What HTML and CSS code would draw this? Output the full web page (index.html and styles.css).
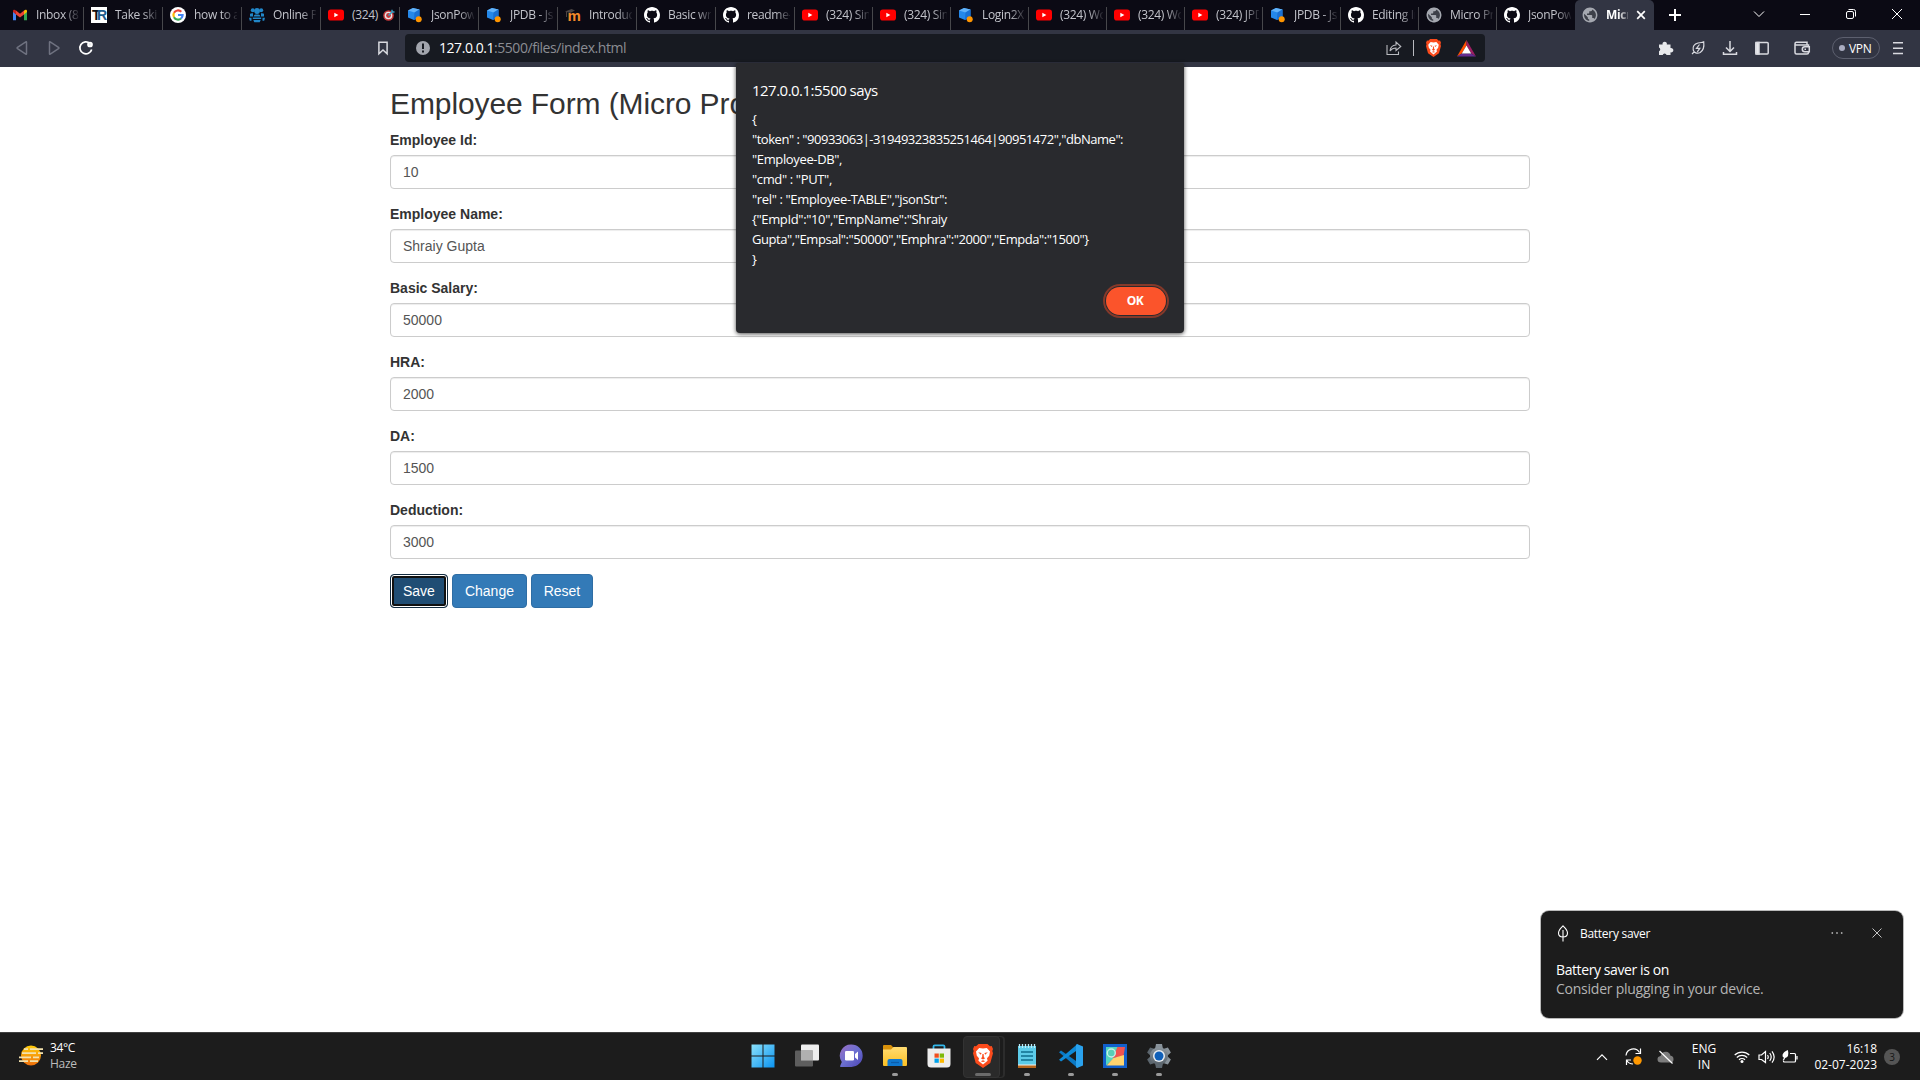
FILE: index.html
```html
<!DOCTYPE html>
<html lang="en">
<head>
<meta charset="utf-8">
<title>Micro Project</title>
<link rel="stylesheet" href="styles.css">
</head>
<body>
<svg class="defs" aria-hidden="true">
  <linearGradient id="g-win" x1="0" y1="0" x2="1" y2="1"><stop offset="0" stop-color="#8be1fb"/><stop offset="1" stop-color="#0a93f0"/></linearGradient>
  <linearGradient id="g-sun" x1="0" y1="0" x2="0" y2="1"><stop offset="0" stop-color="#ffcd0a"/><stop offset="1" stop-color="#f0700c"/></linearGradient>
  <linearGradient id="g-chat" x1="0" y1="0" x2="1" y2="1"><stop offset="0" stop-color="#9a6fc4"/><stop offset=".5" stop-color="#6b6fd0"/><stop offset="1" stop-color="#4c44b4"/></linearGradient>
  <linearGradient id="g-folder" x1="0" y1="0" x2="0" y2="1"><stop offset="0" stop-color="#ffdc72"/><stop offset="1" stop-color="#fbbf22"/></linearGradient>
  <linearGradient id="g-gear" x1="0" y1="0" x2="0" y2="1"><stop offset="0" stop-color="#8c969e"/><stop offset="1" stop-color="#59636b"/></linearGradient>
  <symbol id="gmail" viewBox="0 0 16 16"><path fill="#4285f4" d="M1 4v9.3h3V7z"/><path fill="#34a853" d="M15 4v9.3h-3V7z"/><path fill="#c5221f" d="M1 4.2V5l3 2.4V3.8C2.8 2.300 1 2.700 1 4.200z"/><path fill="#fbbc04" d="M15 4.200V5l-3 2.400V3.800c1.200-1.500 3-1.100 3 .4z"/><path fill="#ea4335" d="M4 3.600l4 3.100 4-3.100v3.900L8 10.600 4 7.500z"/></symbol>
  <symbol id="tr" viewBox="0 0 16 16"><rect width="16" height="16" fill="#fff"/><text x="1" y="13" class="tr-mark">T<tspan>R</tspan></text></symbol>
  <symbol id="google" viewBox="0 0 16 16"><circle cx="8" cy="8" r="8" fill="#fff"/><g fill="none" stroke-width="2.200"><path stroke="#ea4335" d="M4 5.800A4.600 4.600 0 0 1 11.300 4.800"/><path stroke="#fbbc05" d="M4 10.200a4.700 4.700 0 0 1 0-4.400"/><path stroke="#34a853" d="M4 10.200a4.600 4.600 0 0 0 7 1.300"/><path stroke="#4285f4" d="M8 8h4.600a4.600 4.600 0 0 1-1.600 3.500"/></g></symbol>
  <symbol id="people" viewBox="0 0 16 16"><g fill="#2186c8"><circle cx="3.800" cy="3.300" r="2"/><circle cx="12.200" cy="3.300" r="2"/><path d="M1 6.800q1.500-1 3-.5v3.200H1zM12 6.300q1.500-.5 3 .5v2.700h-3zM0 10.800h2.500v3H.800zM13.500 10.800H16l-.8 3h-1.700z"/><circle cx="8" cy="4" r="2.900"/><path d="M4.600 9.500Q5 7.500 6.500 7.500h3q1.500 0 1.900 2zM3.800 10.500h8.400v1.500H3.800zM4.300 13h7.400l-1 2.200H5.300z"/></g></symbol>
  <symbol id="yt" viewBox="0 0 16 16"><rect y="2.500" width="16" height="11" rx="2.800" fill="#f00"/><path fill="#fff" d="M6.300 5.700v4.600L10.400 8z"/></symbol>
  <symbol id="json" viewBox="0 0 16 16"><path fill="#2488ea" d="M1 3.500l5-2.500 6.500 1.500V10l-5.500 3-6-2.500z"/><path fill="#62b2f8" d="M1 3.500l5-2.500 6.500 1.500L7.500 5.500z"/><path fill="#1a70d2" d="M7.500 5.500l5-3V10L7 13z"/><circle cx="11.700" cy="12.300" r="3" fill="#ff9500"/></symbol>
  <symbol id="moodle" viewBox="0 0 16 16"><text x="2.500" y="13.500" class="moodle-mark">m</text><path d="M0 4.500L6.500 2 10 3.500 5 6z" fill="#4b4544"/><path d="M1.500 5v5" stroke="#6b5c53" stroke-width=".7"/></symbol>
  <symbol id="gh" viewBox="0 0 16 16"><path fill="#fff" d="M8 0C3.580 0 0 3.580 0 8c0 3.540 2.290 6.530 5.470 7.590.4.070.55-.17.55-.38 0-.19-.01-.82-.01-1.490-2.010.37-2.530-.49-2.690-.94-.09-.23-.48-.94-.82-1.130-.28-.15-.68-.52-.01-.53.63-.01 1.080.58 1.230.82.72 1.210 1.870.87 2.330.66.07-.52.28-.87.51-1.070-1.780-.2-3.640-.89-3.640-3.950 0-.87.31-1.590.82-2.150-.08-.2-.36-1.020.08-2.120 0 0 .67-.21 2.200.82.64-.18 1.320-.27 2-.27s1.360.09 2 .27c1.530-1.040 2.200-.82 2.200-.82.44 1.100.16 1.920.08 2.120.51.56.82 1.270.82 2.150 0 3.070-1.870 3.750-3.650 3.950.29.25.54.73.54 1.480 0 1.070-.01 1.930-.01 2.200 0 .21.15.46.55.38A8.010 8.010 0 0 0 16 8c0-4.420-3.580-8-8-8z"/></symbol>
  <symbol id="globe" viewBox="1.200 1.200 21.600 21.600"><circle cx="12" cy="12" r="10" fill="#3d4049"/><path fill="#a5a8b0" d="M12 2C6.480 2 2 6.480 2 12s4.480 10 10 10 10-4.480 10-10S17.520 2 12 2zm-1 17.930c-3.950-.49-7-3.850-7-7.930 0-.62.08-1.210.21-1.790L9 15v1c0 1.100.9 2 2 2v1.930zm6.900-2.540c-.26-.81-1-1.390-1.900-1.390h-1v-3c0-.55-.45-1-1-1H8v-2h2c.55 0 1-.45 1-1V7h2c1.100 0 2-.9 2-2v-.41c2.930 1.190 5 4.060 5 7.410 0 2.080-.8 3.970-2.100 5.390z"/></symbol>
  <symbol id="dart" viewBox="0 0 12 12"><circle cx="5.500" cy="6.500" r="5.300" fill="#c4383a"/><circle cx="5.500" cy="6.500" r="3.800" fill="#e8e4e4"/><circle cx="5.500" cy="6.500" r="2.400" fill="#c4383a"/><path d="M5.500 6.500L10 2M9 .8v2.200h2.500" stroke="#3c9cc0" stroke-width="1.500" fill="none"/></symbol>
  <symbol id="brave" viewBox="0 0 20 24"><path fill="#fb4b1c" d="M5.500 0h9L17 2.200l1.700-.2L20 5l-.7 2L20 9.200 17.300 19 10 24 2.700 19 0 9.200.7 7 0 5l1.300-3 1.700.2z"/><path fill="#fff" d="M6.200 4L10 4.600l3.800-.6 3.200 3.500-.8 4.300-2.200 2.500.6 2.500-4.600 3.700-4.600-3.700.6-2.500-2.200-2.500L3 7.500z"/><path fill="#fb4b1c" d="M5.200 8.300l3.400.8-.8 1.700zM14.800 8.300l-3.400.8.800 1.700zM9.400 10h1.200l.3 3.300 1.300.9L10 15.500l-2.200-1.300 1.300-.9zM7.700 17.200L10 16.300l2.300.9L10 18z"/></symbol>
</svg>

<header class="tabstrip">
  <div class="tab"><svg class="fav"><use href="#gmail"/></svg><span class="tab-title">Inbox (86)</span></div>
  <div class="tab"><svg class="fav"><use href="#tr"/></svg><span class="tab-title">Take skill</span></div>
  <div class="tab"><svg class="fav"><use href="#google"/></svg><span class="tab-title">how to add</span></div>
  <div class="tab"><svg class="fav"><use href="#people"/></svg><span class="tab-title">Online Pr</span></div>
  <div class="tab"><svg class="fav"><use href="#yt"/></svg><span class="tab-title whole">(324) <svg class="dart"><use href="#dart"/></svg></span></div>
  <div class="tab"><svg class="fav"><use href="#json"/></svg><span class="tab-title">JsonPow</span></div>
  <div class="tab"><svg class="fav"><use href="#json"/></svg><span class="tab-title">JPDB - Js</span></div>
  <div class="tab"><svg class="fav"><use href="#moodle"/></svg><span class="tab-title">Introduct</span></div>
  <div class="tab"><svg class="fav"><use href="#gh"/></svg><span class="tab-title">Basic writ</span></div>
  <div class="tab"><svg class="fav"><use href="#gh"/></svg><span class="tab-title">readme-t</span></div>
  <div class="tab narrow"><svg class="fav"><use href="#yt"/></svg><span class="tab-title">(324) Sim</span></div>
  <div class="tab narrow"><svg class="fav"><use href="#yt"/></svg><span class="tab-title">(324) Sim</span></div>
  <div class="tab narrow"><svg class="fav"><use href="#json"/></svg><span class="tab-title">Login2Xp</span></div>
  <div class="tab narrow"><svg class="fav"><use href="#yt"/></svg><span class="tab-title">(324) Wo</span></div>
  <div class="tab narrow"><svg class="fav"><use href="#yt"/></svg><span class="tab-title">(324) Wo</span></div>
  <div class="tab narrow"><svg class="fav"><use href="#yt"/></svg><span class="tab-title">(324) JPD</span></div>
  <div class="tab narrow"><svg class="fav"><use href="#json"/></svg><span class="tab-title">JPDB - Js</span></div>
  <div class="tab narrow"><svg class="fav"><use href="#gh"/></svg><span class="tab-title">Editing In</span></div>
  <div class="tab narrow"><svg class="fav"><use href="#globe"/></svg><span class="tab-title">Micro Pro</span></div>
  <div class="tab narrow last"><svg class="fav"><use href="#gh"/></svg><span class="tab-title">JsonPow</span></div>
  <div class="tab active"><svg class="fav"><use href="#globe"/></svg><span class="tab-title">Micro</span>
    <svg class="tab-close" viewBox="0 0 10 10"><path d="M1.200 1.200l7.600 7.600M8.800 1.200L1.200 8.800" stroke="#fff" stroke-width="1.700"/></svg></div>
  <svg class="newtab" viewBox="0 0 12 12"><path d="M6 0v12M0 6h12" stroke="#fff" stroke-width="2"/></svg>
  <div class="win-controls">
    <svg viewBox="0 0 12 12"><path d="M1 3.500l5 5 5-5"/></svg>
    <svg viewBox="0 0 12 12"><path d="M1 6.500h10"/></svg>
    <svg viewBox="0 0 12 12"><rect x="1.500" y="3.500" width="7" height="7" rx="1.500"/><path d="M3.500 1.500H8.500a2 2 0 0 1 2 2V8.500"/></svg>
    <svg viewBox="0 0 12 12"><path d="M1 1l10 10M11 1L1 11"/></svg>
  </div>
</header>

<nav class="toolbar">
  <div class="nav-left">
    <svg class="tb dim" viewBox="0 0 32 32"><path d="M20.500 10.200v11.600q0 .7-.7.300L11.500 16.600q-.8-.6 0-1.200l8.300-5.500q.7-.4.700.3z"/></svg>
    <svg class="tb dim" viewBox="0 0 32 32"><path d="M11.500 10.200v11.600q0 .7.700.3l8.300-5.500q.8-.6 0-1.200l-8.300-5.500q-.7-.4-.7.300z"/></svg>
    <svg class="tb reload" viewBox="0 0 32 32"><path d="M20 11.500A6 6 0 1 0 21.700 17.500"/><circle cx="20" cy="12.500" r="2" class="solid"/></svg>
    <svg class="tb bookmark" viewBox="0 0 32 32"><path d="M11.900 10.200h8.200v11.500L16 18l-4.100 3.700z"/></svg>
  </div>
  <div class="urlbar">
    <svg class="info" viewBox="0 0 14 14"><circle cx="7" cy="7" r="7" fill="#a2a5ad"/><path d="M7 2.500V8M7 9.500v2" stroke="#171a21" stroke-width="2"/></svg>
    <span class="url"><b>127.0.0.1</b>:5500/files/index.html</span>
    <svg class="share" viewBox="0 0 16 16"><path d="M1 5v9.500h11.500V11.500M4 11q.5-5.500 6-6V2l4.800 4.500L10 10.500V8Q6 8 4 11z"/></svg>
    <i class="url-sep"></i>
    <svg class="brave"><use href="#brave"/></svg>
    <svg class="bat" viewBox="0 0 19 17"><path fill="#ff5000" d="M9.500 0v5.500L4.800 13.500 0 16.500z"/><path fill="#9e1f63" d="M9.500 0v5.500l4.700 8 4.800 3z"/><path fill="#662d91" d="M0 16.500l4.800-3h9.400l4.800 3z"/><path fill="#fff" d="M9.500 5.500l4.700 8H4.800z"/></svg>
  </div>
  <div class="nav-right">
    <svg class="tb" viewBox="0 0 32 32"><path class="solid" stroke="none" d="M9 12.500h3.600a2.200 2.200 0 1 1 4.200 0h3.700v3.600a2.200 2.200 0 1 1 0 4.200V23h-3.900a2 2 0 0 0-3.900 0H9v-3.800a2 2 0 0 0 0-3.700z"/></svg>
    <svg class="tb thin" viewBox="0 0 32 32"><path d="M21.700 9.800q1 8-3.500 10.700c-3 1.500-6.500.3-7-2.700-.6-3.500 1.800-6 4.800-6.800q4-.5 5.700-1.200zM12.500 19.500l-2.500 2.500"/><path d="M17.500 12.500l-3 3.800h3.300l-2.500 3.500"/></svg>
    <svg class="tb" viewBox="0 0 32 32"><path d="M16 9v10M12 15.500l4 4 4-4M9.500 20v2.300h13V20"/></svg>
    <svg class="tb" viewBox="0 0 32 32"><rect x="9.800" y="10.500" width="12.400" height="11.500" rx="1"/><path class="solid" d="M10 10.500h3V22h-3z"/></svg>
    <svg class="tb wallet" viewBox="0 0 32 32"><path d="M22.500 14.500V13H10.500Q9 13 9 11.700T10.500 10.300h10.500V13M9 11.700V20.500q0 1.500 1.500 1.500h10.500q1.500 0 1.500-1.500V20"/><path d="M23.300 14.700h-4.500a2.500 2.500 0 0 0 0 5h4.500zM18.500 17.200h1.500"/></svg>
    <span class="vpn"><i></i>VPN</span>
    <svg class="tb menu" viewBox="0 0 32 32"><path d="M11 10.800h10M11 16.200h10M11 21.500h10"/></svg>
  </div>
</nav>

<main class="page">
  <div class="container">
    <h2>Employee Form (Micro Project)</h2>
    <form>
      <div class="group"><label for="f1">Employee Id:</label><input id="f1" value="10"></div>
      <div class="group"><label for="f2">Employee Name:</label><input id="f2" value="Shraiy Gupta" spellcheck="false"></div>
      <div class="group"><label for="f3">Basic Salary:</label><input id="f3" value="50000"></div>
      <div class="group"><label for="f4">HRA:</label><input id="f4" value="2000"></div>
      <div class="group"><label for="f5">DA:</label><input id="f5" value="1500"></div>
      <div class="group"><label for="f6">Deduction:</label><input id="f6" value="3000"></div>
      <div class="buttons"><button type="button" class="btn pressed">Save</button><button type="button" class="btn">Change</button><button type="button" class="btn reset">Reset</button></div>
    </form>
  </div>
</main>

<section class="dialog">
  <div class="dialog-title">127.0.0.1:5500 says</div>
  <div class="dialog-body">
    <div>{</div>
    <div class="l-token">"token" : "90933063|-31949323835251464|90951472","dbName":</div>
    <div>"Employee-DB",</div>
    <div>"cmd" : "PUT",</div>
    <div>"rel" : "Employee-TABLE","jsonStr":</div>
    <div>{"EmpId":"10","EmpName":"Shraiy</div>
    <div class="l-pay">Gupta","Empsal":"50000","Emphra":"2000","Empda":"1500"}</div>
    <div>}</div>
  </div>
  <button type="button" class="ok">OK</button>
</section>

<aside class="toast">
  <div class="toast-head">
    <svg class="leaf" viewBox="0 0 12 17"><path d="M6 .8Q1.500 5 1.500 8q0 4 4.500 4t4.500-4Q10.500 5 6 .8zM6 5v11.500"/></svg>
    <span class="toast-app">Battery saver</span>
    <svg class="dots" viewBox="0 0 12 4"><circle cx="1.300" cy="2" r=".9"/><circle cx="6" cy="2" r=".9"/><circle cx="10.700" cy="2" r=".9"/></svg>
    <svg class="x" viewBox="0 0 10 10"><path d="M.5.500l9 9M9.500.500l-9 9"/></svg>
  </div>
  <div class="toast-title">Battery saver is on</div>
  <div class="toast-text">Consider plugging in your device.</div>
</aside>

<footer class="taskbar">
  <div class="weather">
    <svg viewBox="0 0 24 22"><circle cx="12" cy="10.500" r="10" fill="url(#g-sun)"/><path d="M5 4.200h4M11 4.200h13M3 8.200h14M19 8.200h5M0 12.300h12M14 12.300h6M0 16.200h9M11 16.200h8" stroke="#f3e2ae" stroke-width="1.800"/></svg>
    <div><div class="temp">34°C</div><div class="cond">Haze</div></div>
  </div>
  <div class="apps">
    <div class="app"><svg viewBox="0 0 24 24"><path fill="url(#g-win)" d="M.5.500h11v11H.5zM12.500.500h11v11h-11zM.5 12.500h11v11H.5zM12.500 12.500h11v11h-11z"/></svg></div>
    <div class="app"><svg viewBox="0 0 24 24"><rect x="6" y=".5" width="18" height="16" rx="1" fill="#eee"/><rect y="6.500" width="18" height="16" rx="1" fill="#666" opacity=".9"/><path d="M6 6.500h12v10H6z" fill="#b0b0b0"/></svg></div>
    <div class="app"><svg viewBox="0 0 24 24"><path fill="url(#g-chat)" d="M12.500.500a11.200 11.200 0 1 1 0 22.400H1.500Q.8 22.500 1.500 21l1.300-3A11.200 11.200 0 0 1 12.500.500z"/><rect x="6" y="7" width="9" height="9.500" rx="1.300" fill="#fff"/><path fill="#fff" d="M16 10l3-2.500v8.500l-3-2.500z"/></svg></div>
    <div class="app running"><svg viewBox="0 0 24 24"><path fill="#d9910a" d="M0 2q0-1 1-1h7l3 3H24v6H0z"/><path fill="url(#g-folder)" d="M0 5.500h8L10.500 3H23q1 0 1 1v17q0 1-1 1H1q-1 0-1-1z"/><path fill="#0f78d0" d="M4.500 22v-5q0-2 2-2h11q2 0 2 2v5z"/><path d="M8 18.500h8" stroke="#0b5cab" stroke-width="1.300"/></svg></div>
    <div class="app"><svg viewBox="0 0 24 24"><path d="M6.500 6V2.500Q6.500 1.300 7.700 1.300h8.600q1.200 0 1.200 1.200V6" fill="none" stroke="#32b7ea" stroke-width="1.800"/><path fill="#ededed" d="M.5 4.500h23V20q0 3.500-3.500 3.500H4Q.5 23.500.5 20z"/><path fill="#f04e1f" d="M7.500 9.500h4.300v4.200H7.500z"/><path fill="#7eb908" d="M12.700 9.500H17v4.200h-4.300z"/><path fill="#00a2ec" d="M7.500 14.600h4.300v4.200H7.500z"/><path fill="#fdb900" d="M12.700 14.600H17v4.200h-4.300z"/></svg></div>
    <div class="app running current"><svg class="lion"><use href="#brave"/></svg></div>
    <div class="app running"><svg viewBox="0 0 24 24"><path fill="#b5651d" d="M3 20h18v4H3z"/><path fill="#f4f0ea" d="M3 20h18v1.500H3z"/><path fill="#5ccbe9" d="M3 2h18v18.500H3z"/><path d="M6 8h12M6 12h12M6 16h12" stroke="#0e6f8e" stroke-width="1.700"/><path d="M4.500 0v4M7.500 0v4M10.500 0v4M13.500 0v4M16.500 0v4M19.500 0v4" stroke="#b9ecf8" stroke-width="1.300"/></svg></div>
    <div class="app running"><svg viewBox="0 0 24 24"><path fill="#0a78c4" d="M0 8.200l2-1.600L18.500 18v6L1.500 9.500z"/><path fill="#0e8ad8" d="M0 15.800l2 1.600L18.500 6V0L1.500 14.500z"/><path fill="#2aa2ee" d="M18 0l6 2.500v19L18 24l-1-1V1z"/></svg></div>
    <div class="app running"><svg viewBox="0 0 24 24"><path fill="#1160cc" d="M0 0h24v24H0z"/><path fill="#55d6c0" d="M3 3h12L11 14l-8 7.500z"/><path fill="#ef5350" d="M14.500 3H22l-1.500 9L9.500 14z"/><path fill="#ffd46e" d="M21 11v10.500H3.500l7-7.500z"/><circle cx="8.300" cy="9" r="4" fill="#57cfb7" stroke="#c4f0e8" stroke-width="1.400"/></svg></div>
    <div class="app running"><svg viewBox="0 0 24 24"><g transform="translate(12 12)"><g fill="url(#g-gear)"><path d="M-3-12h6l1 5h-8zM-3 12h6l1-5h-8z"/><path d="M-3-12h6l1 5h-8zM-3 12h6l1-5h-8z" transform="rotate(60)"/><path d="M-3-12h6l1 5h-8zM-3 12h6l1-5h-8z" transform="rotate(120)"/><circle r="9"/></g><circle r="6" fill="#e9eef2"/><circle r="4.500" fill="#0f5fb8"/></g></svg></div>
  </div>
  <div class="tray">
    <svg class="t-chev" viewBox="0 0 12 8"><path d="M1 6.800L6 1.800l5 5"/></svg>
    <svg class="t-sync" viewBox="0 0 18 18"><path d="M1 7.500A7.300 7.300 0 0 1 14.500 4.500M15.500.500V5.500H10.500M1.500 17V12h4.500M1.800 12.500Q4 16 8 16"/><circle cx="12.500" cy="12.500" r="4.200" fill="#ff9800" stroke="none"/></svg>
    <svg class="t-cloud" viewBox="0 0 17 14"><path d="M4 12.500Q.5 12.500.5 9.300.5 6.500 3.500 6 5 1.500 9 1.700q3.700.3 4.500 4 3 .3 3 3.500t-3 3.300z" fill="#7c7c7c" stroke="none"/><path d="M2.500 1l13 12.500"/></svg>
    <div class="lang">ENG<br>IN</div>
    <svg class="t-wifi" viewBox="0 0 16 13"><path d="M.7 5a10.500 10.500 0 0 1 14.600 0M2.800 7.500a7.400 7.400 0 0 1 10.400 0M5 9.800a4.300 4.300 0 0 1 6 0"/><circle cx="8" cy="11.500" r="1.500" fill="#fff" stroke="none"/></svg>
    <svg class="t-vol" viewBox="0 0 17 14"><path d="M1 5h2.500L7.500 1.500v11L3.500 9.500H1zM9.500 5q1.500 2 0 4M11.700 3q3 4 0 8M14 1.300q4.300 5.700 0 11.400"/></svg>
    <svg class="t-bat" viewBox="0 0 16 14"><path d="M8 3.500H12.500q1 0 1 1v6.500q0 1-1 1H2.500q-1 0-1-1M15 6v3.500"/><path d="M5.800 0Q7.800 7 2.800 8 0 7.500.7 4.500 1.500 1.700 5.800 0z" fill="#fff" stroke="none"/><path d="M3.500 6l-2.300 4.500"/></svg>
    <div class="clock">16:18<br>02-07-2023</div>
    <span class="count">3</span>
  </div>
</footer>
</body>
</html>
```
FILE: styles.css
```css
* { box-sizing: border-box; }
html, body { margin: 0; height: 100%; overflow: hidden; }
body {
  display: flex;
  flex-direction: column;
  height: 1080px;
  background: #fff;
  font-family: "Open Sans", "Noto Sans", sans-serif;
  font-size: 12px;
}
svg { display: block; flex: none; }
.defs { position: absolute; width: 0; height: 0; }
.tr-mark { font: bold 14px "Liberation Sans", sans-serif; letter-spacing: -3.5px; fill: #111; }
.tr-mark tspan { fill: #1d5c8c; }
.moodle-mark { font: bold 15px "Liberation Sans", sans-serif; fill: #f28a2a; }

/* Tab strip */
.tabstrip {
  display: flex;
  flex: none;
  height: 30px;
  padding-left: 5px;
  background: #0b0a14;
}
.tab {
  display: flex;
  flex: none;
  align-items: center;
  gap: 8px;
  width: 79px;
  padding-left: 7px;
  color: #c2c3ca;
  background: linear-gradient(#47474b, #47474b) right bottom / 1px 23px no-repeat;
}
.tab.narrow { width: 78px; }
.tab.last { background: none; }
.tab.active {
  background: #323543;
  border-radius: 5px 5px 0 0;
  padding-left: 7px;
  color: #fff;
  font-weight: 700;
}
.fav { width: 16px; height: 16px; }
.tab-title {
  width: 43px;
  overflow: hidden;
  white-space: nowrap;
  letter-spacing: -.32px;
  line-height: 18px;
  -webkit-mask-image: linear-gradient(90deg, #000 28px, transparent 45px);
  mask-image: linear-gradient(90deg, #000 28px, transparent 45px);
}
.tab-title.whole { display: flex; gap: 5px; align-items: center; -webkit-mask-image: none; mask-image: none; }
.dart { width: 12px; height: 12px; }
.active .tab-title {
  width: 22px;
  -webkit-mask-image: linear-gradient(90deg, #000 12px, transparent 25px);
  mask-image: linear-gradient(90deg, #000 12px, transparent 25px);
}
.tab-close { width: 10px; height: 10px; }
.newtab { width: 12px; height: 12px; margin: 9px 0 0 15px; }
.win-controls { display: flex; margin-left: auto; padding-right: 17px; gap: 34px; align-items: center; height: 28px; }
.win-controls svg { width: 12px; height: 12px; fill: none; stroke: #fff; stroke-width: 1; }

/* Address row */
.toolbar { display: flex; flex: none; height: 37px; background: #323543; }
.nav-left { display: flex; width: 405px; padding: 2px 6px 0; }
.tb { width: 32px; height: 32px; fill: none; stroke: #d9dae0; stroke-width: 1.5; }
.tb.dim { stroke: #6f7280; }
.tb.thin { stroke-width: 1.2; }
.tb .solid { fill: #e8e9ec; }
.reload { stroke: #fff; stroke-width: 1.7; }
.bookmark { margin-left: auto; }
.urlbar {
  display: flex;
  align-items: center;
  width: 1080px;
  height: 28px;
  margin-top: 4px;
  padding: 0 9px 0 11px;
  background: #171a21;
  border-radius: 4px;
}
.info { width: 14px; height: 14px; }
.url { margin-left: 9px; color: #8b8d93; font-size: 14px; letter-spacing: -.45px; line-height: 20px; }
.url b { font-weight: 400; color: #fff; }
.share { width: 16px; height: 16px; margin-left: auto; fill: none; stroke: #b9bbc0; stroke-width: 1.1; }
.url-sep { width: 1px; height: 16px; margin: 0 12px 0 11px; background: #b9bbc0; }
.brave { width: 15px; height: 18px; }
.bat { width: 19px; height: 17px; margin-left: 16px; }
.nav-right { display: flex; flex: 1; justify-content: flex-end; padding: 2px 6px 0 0; }
.wallet { margin-left: 8px; }
.vpn {
  display: flex;
  align-items: center;
  gap: 4px;
  width: 48px;
  height: 22px;
  margin: 5px 2px 0 14px;
  padding-left: 6px;
  border: 1px solid #5d606f;
  border-radius: 11px;
  color: #fff;
  letter-spacing: -.3px;
}
.vpn i { width: 6px; height: 6px; border-radius: 50%; background: #a9acc0; }

/* Page */
.page { flex: 1; background: #fff; font-family: "Liberation Sans", Arial, sans-serif; font-size: 14px; color: #333; }
.container { width: 1170px; margin: 0 auto; padding: 0 15px; }
h2 { margin: 0 0 10px; padding-top: 20px; font-size: 30px; font-weight: 500; line-height: 33px; letter-spacing: -.1px; }
form { line-height: 20px; }
.group { margin-bottom: 15px; }
label { display: block; margin-bottom: 5px; font-weight: 700; }
input {
  display: block;
  width: 100%;
  height: 34px;
  padding: 6px 12px;
  border: 1px solid #ccc;
  border-radius: 4px;
  box-shadow: inset 0 1px 1px rgba(0, 0, 0, .075);
  background: #fff;
  color: #555;
  font: 14px/20px "Liberation Sans", Arial, sans-serif;
}
.buttons { display: flex; gap: 4px; }
.btn {
  height: 34px;
  padding: 0 12px;
  border: 1px solid #2e6da4;
  border-radius: 4px;
  background: #337ab7;
  color: #fff;
  font: 14px/20px "Liberation Sans", Arial, sans-serif;
}
.btn.reset { width: 62px; padding: 0; }
.btn.pressed {
  background: #204d74;
  border-color: #122b40;
  box-shadow: inset 0 0 0 1px #fff, inset 0 0 0 3px #101010;
}

/* Alert */
.dialog {
  position: absolute;
  left: 736px;
  top: 63px;
  display: flex;
  flex-direction: column;
  width: 448px;
  height: 270px;
  padding: 15px 16px 16px;
  background: #292a2e;
  border-radius: 2px 2px 4px 4px;
  box-shadow: 0 1px 4px rgba(0, 0, 0, .7);
  color: #fff;
}
.dialog-title { font-size: 15px; line-height: 24px; letter-spacing: -.52px; }
.dialog-body { margin-top: 7px; font-size: 13px; line-height: 20px; letter-spacing: -.36px; white-space: nowrap; }
.l-token { letter-spacing: -.475px; }
.l-pay { letter-spacing: -.43px; }
.ok {
  align-self: flex-end;
  width: 60px;
  height: 28px;
  margin: 18px 2px 0 0;
  padding: 0 2px 0 0;
  border: 0;
  border-radius: 14px;
  background: #fb542b;
  box-shadow: 0 0 0 1px #292a2e, 0 0 0 3px #85392a;
  color: #fff;
  font: 700 12px/28px "Open Sans", sans-serif;
  letter-spacing: -.4px;
}

/* Notification */
.toast {
  position: absolute;
  left: 1541px;
  top: 911px;
  width: 362px;
  height: 107px;
  padding: 11px 15px;
  background: #1c1c1c;
  border-radius: 8px;
  box-shadow: 0 0 0 1px #b9b9b9;
  color: #fff;
}
.toast-head { display: flex; align-items: center; height: 22px; padding: 0 6px 0 1px; }
.leaf { width: 12px; height: 17px; fill: none; stroke: #fff; stroke-width: 1.1; }
.toast-app { margin-left: 11px; letter-spacing: -.28px; }
.dots { width: 12px; height: 4px; margin-left: auto; fill: #aaa; }
.x { width: 10px; height: 10px; margin-left: 29px; fill: none; stroke: #c4c4c4; }
.toast-title, .toast-text { font-size: 14px; line-height: 19px; }
.toast-title { margin-top: 16px; letter-spacing: -.4px; }
.toast-text { color: #b4b4b4; letter-spacing: -.24px; }

/* Taskbar */
.taskbar {
  display: grid;
  grid-template-columns: 741px 440px 1fr;
  flex: none;
  height: 48px;
  border-top: 1px solid #404040;
  background: #1c1c1c;
  color: #fff;
  line-height: 16px;
}
.weather { display: flex; gap: 7px; padding: 7px 0 0 19px; }
.weather svg { width: 24px; height: 22px; margin-top: 5px; }
.temp { letter-spacing: -.35px; }
.cond { color: #bcbcbc; letter-spacing: -.3px; }
.apps { display: flex; }
.app { position: relative; display: flex; width: 44px; padding: 11px 0 0 10px; }
.app svg { width: 24px; height: 24px; }
.running::after {
  content: "";
  position: absolute;
  left: 19px;
  top: 40px;
  width: 6px;
  height: 3px;
  border-radius: 2px;
  background: #9a9a9a;
}
.current { padding-left: 0; }
.current::before {
  content: "";
  position: absolute;
  left: 2px;
  top: 3px;
  width: 35px;
  height: 40px;
  border: 1px solid #333;
  border-radius: 4px;
  background: #2a2a2a;
  box-shadow: 4px 0 0 -1px #1c1c1c, 5px 0 0 #2c2c2c;
}
.current::after { left: 14px; width: 16px; background: #6b6b6b; }
.app .lion { position: relative; width: 20px; height: 24px; margin-left: 12px; }
.tray { display: flex; align-items: center; justify-content: flex-end; padding-right: 20px; }
.tray svg { fill: none; stroke: #fff; stroke-width: 1.2; }
.t-chev { width: 12px; height: 8px; }
.t-sync { width: 18px; height: 18px; margin-left: 17px; }
.t-cloud { width: 17px; height: 14px; margin-left: 14px; }
.lang { width: 28px; margin-left: 16px; text-align: center; }
.t-wifi { width: 16px; height: 13px; margin-left: 16px; }
.t-vol { width: 17px; height: 14px; margin-left: 8px; }
.t-bat { width: 16px; height: 14px; margin-left: 7px; }
.clock { width: 72px; margin-left: 7px; text-align: right; white-space: nowrap; }
.count {
  width: 16px;
  height: 16px;
  margin-left: 7px;
  border-radius: 50%;
  background: #555;
  color: #151515;
  font-size: 10px;
  text-align: center;
}
```
